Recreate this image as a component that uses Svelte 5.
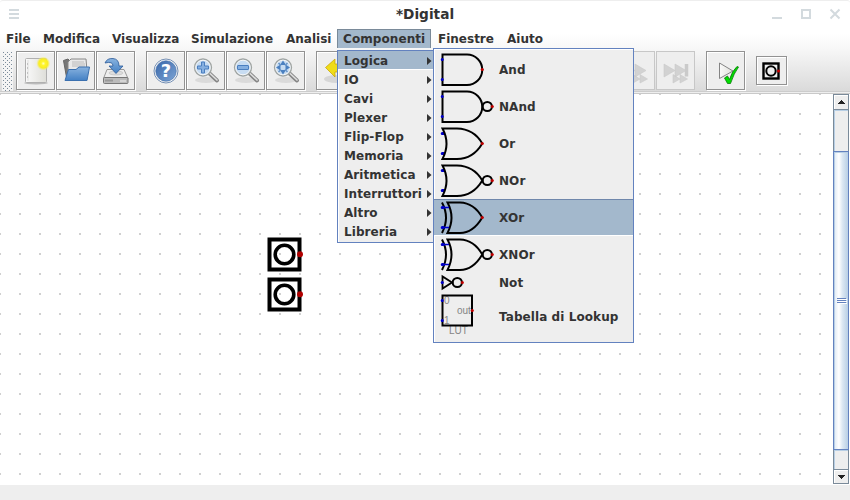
<script>
  const menus = [
    { t: 'File', x: 6 }, { t: 'Modifica', x: 43 }, { t: 'Visualizza', x: 112 }, { t: 'Simulazione', x: 191 },
    { t: 'Analisi', x: 286 }, { t: 'Componenti', x: 343 }, { t: 'Finestre', x: 438 }, { t: 'Aiuto', x: 507 }
  ];
  const widths = menus.map((m, i) => (i < 7 ? menus[i + 1].x - m.x : 60));
  const groups = ['Logica', 'IO', 'Cavi', 'Plexer', 'Flip-Flop', 'Memoria', 'Aritmetica', 'Interruttori', 'Altro', 'Libreria'];
  const parts = [
    { t: 'And', k: 'and' }, { t: 'NAnd', k: 'and', inv: true }, { t: 'Or', k: 'or' }, { t: 'NOr', k: 'or', inv: true },
    { t: 'XOr', k: 'xor' }, { t: 'XNOr', k: 'xor', inv: true }, { t: 'Not', k: 'not', h: 19 }, { t: 'Tabella di Lookup', k: 'lut', h: 49 }
  ];
  const tools = ['new', 'open', 'save', '', 'help', 'in', 'out', 'fit', '', 'back'];
</script>

{#snippet tool(k)}
  <svg width="39" height="39" viewBox="0 0 39 39">
    {#if k === 'new'}
      <ellipse cx="20" cy="32" rx="12" ry="1.5" fill="#999" opacity=".6" />
      <rect x="9.5" y="7.5" width="21" height="24" rx="1" fill="url(#paper)" stroke="#b0b0b0" />
      <path d="M12 9V30" stroke="#ddd" /><path d="M11 13h1M11 17h1M11 22h1M11 26h1" stroke="#999" />
      <circle cx="27.3" cy="12.5" r="7" fill="url(#glow)" />
    {:else if k === 'open'}
      <path d="M7.5 9.5L12 8l2 2v18l-3 1z" fill="#777" stroke="#666" />
      <path d="M12 11l3-3h15l1 12H12z" fill="#e9e9e9" stroke="#888" /><path d="M16 11h12M16 13h13M16 15h13" stroke="#bbb" />
      <path d="M9 29.5L12.5 18.5H20l3-2.5h10.5L31 29.5z" fill="url(#blue)" stroke="#3b70af" />
    {:else if k === 'save'}
      <path d="M11 18.5h17l4 9H7.5z" fill="#eee" stroke="#999" />
      <rect x="7.5" y="26.5" width="24.5" height="6" rx="1" fill="#bbb" stroke="#777" />
      <path d="M10 28.5v2M12 28.5v2M14 28.5v2M16 28.5v2" stroke="#777" /><path d="M24 30h6" stroke="#eee" />
      <ellipse cx="20" cy="22" rx="7" ry="2" fill="#ddd" stroke="#bbb" stroke-width=".6" />
      <path d="M9 12Q11 7 17 7.5Q23 8 23 15h4l-7 7.500-7-7.500h4q0-5-8-3z" fill="url(#blue)" stroke="#2c5b99" stroke-width=".8" />
    {:else if k === 'help'}
      <circle cx="20" cy="20" r="12" fill="#f4f4f4" stroke="#7590b5" /><circle cx="20" cy="20" r="10.3" fill="url(#helpblue)" stroke="#3465a4" stroke-width=".5" />
      <text x="20" y="26" text-anchor="middle" class="qmark">?</text>
    {:else if k === 'in' || k === 'out' || k === 'fit'}
      <ellipse cx="20" cy="29" rx="11" ry="3" fill="#aaa" opacity=".28" />
      <path d="M22.5 21.5L31 29.5" stroke="#858585" stroke-width="4" stroke-linecap="round" /><path d="M23 21.5L31 29" stroke="#ddd" stroke-width="1.7" stroke-linecap="round" />
      <circle cx="17" cy="16.5" r="8.4" fill="#c7dcf2" stroke="#a0a5a3" stroke-width="1.5" /><circle cx="17" cy="16.5" r="7.3" fill="none" stroke="#f7f7f7" />
      {#if k === 'in'}<path d="M15.5 11h3v4H22.500v3h-4v4h-3V18h-4v-3h4z" fill="#85afe0" stroke="#4b7fc0" />
      {:else if k === 'out'}<rect x="11.5" y="14.5" width="11" height="4" rx=".5" fill="#85afe0" stroke="#4b7fc0" />
      {:else}<path d="M17 9.500l3 4.500h-6zM17 23.500l3-4.500h-6zM10 16.500L14.500 13.500v6zM24 16.500L19.500 13.500v6z" fill="#4b80c0" /><path d="M12.500 12l2.500 2.500M21.500 12l-2.500 2.500M12.500 21l2.500-2.500M21.500 21l-2.500-2.500" stroke="#6795ca" stroke-width="1.5" />{/if}
    {:else if k === 'back'}
      <ellipse cx="21" cy="28" rx="13" ry="4" fill="#aaa" opacity=".35" />
      <path d="M9.5 16.5L19 8v5h11v8H19v5z" fill="#f0dc18" stroke="#c4a000" stroke-width=".7" />
    {:else if k === 'fast' || k === 'end'}
      <path d="M8 13v13l11-6.500zM19 13v13l11-6.500zM17 23.500v8.500l7-4zM24 23.500v8.500l7.500-4z" fill="#d2d2d2" stroke="#cacaca" stroke-width=".6" />
      {#if k === 'end'}<path d="M30.5 13v12.5" stroke="#cacaca" stroke-width="3.5" />{/if}
    {:else if k === 'check'}
      <path d="M13.5 12v15.5L27 20z" fill="url(#paper)" stroke="#777" stroke-width=".9" />
      <path d="M18.5 27l3-2 2 3.500Q26 20 31 15.500l1.500.5Q28 22 24.500 32.500h-3z" fill="#0d0" stroke="#087808" stroke-width=".8" />
    {/if}
  </svg>
{/snippet}

{#snippet gate(p)}
  <svg class="gate" width="56" height={p.h ?? 37} fill="none" stroke="#000" stroke-width="2">
    {#if p.k === 'and'}
      <path d="M2.5 3.5H27A15.2 15.2 0 0 1 27 34H2.5z" />
      <path class="pin" d="M2.2 8.500h.1M2.200 28.500h.1" />
    {:else if p.k === 'or'}
      <path class="pin" d="M2.2 8.500h1.500M2.200 28.500h1.500" />
      <path d="M2.5 3.5H17Q34 4 42.300 18.500Q33 34 17 34H2.500Q10.500 18.500 2.500 3.500z" />
    {:else if p.k === 'xor'}
      <path d="M2 3.5Q10 18.500 2 34M7.500 3.500H20Q34 4 42.300 18.500Q33 34 20 34H7.500Q15.500 18.500 7.500 3.500z" />
      <path class="line" d="M2 8.500h7M2 28.500h7" />
      <path class="pin" d="M2.2 8.500h1M2.200 28.500h1" />
    {:else if p.k === 'not'}
      <path d="M2.5 3.5V15.5L12 9.5z" stroke-width="1.8" /><circle cx="17.3" cy="9.5" r="4.6" />
      <path class="pin" d="M2.2 9.500h.1" /><path class="red" d="M22.300 9.500h.1" />
    {:else}
      <g class="small"><text x="4" y="11.8">0</text><text x="4" y="31.7">1</text><text x="17" y="21.7">out</text><text x="9" y="42">LUT</text></g>
      <rect x="2.5" y="3.5" width="29.5" height="30" />
      <path class="pin" d="M2.2 8.500h.1M2.200 28.500h.1" />
      <path class="red" d="M32.2 18.500h.1" />
    {/if}
    {#if p.h == null}
      {#if p.inv}<circle cx="47.3" cy="18.5" r="4.6" />{/if}
      <path class="red" d={p.inv ? 'M52.2 18.5h.1' : 'M42.2 18.5h.1'} />
    {/if}
  </svg>
{/snippet}

<div class="window">
  <svg class="defs" width="0" height="0">
    <defs>
      <linearGradient id="paper"><stop stop-color="#fafafa" /><stop offset="1" stop-color="#deded9" /></linearGradient>
      <radialGradient id="glow"><stop stop-color="#ffffc0" /><stop offset=".3" stop-color="#fff52a" /><stop offset=".65" stop-color="#f8ec25" /><stop offset="1" stop-color="#f8f060" stop-opacity="0" /></radialGradient>
      <linearGradient id="blue" x2="0" y2="1"><stop stop-color="#89b3df" /><stop offset="1" stop-color="#4380c4" /></linearGradient>
      <linearGradient id="helpblue" x2="1" y2="1"><stop stop-color="#3967a9" /><stop offset="1" stop-color="#7ca4d5" /></linearGradient>
    </defs>
  </svg>
  <header class="title">
    <svg width="20" height="28" class="burger"><path d="M0 10h10M0 14h10M0 18h10" stroke="#d3dade" stroke-width="2" /></svg>
    <span>*Digital</span>
    <svg width="80" height="28" class="controls" fill="none" stroke="#d3dade" stroke-width="2"><path d="M2 18h10M60.5 9.5l9 9M69.500 9.500l-9 9" /><path d="M32 10h8v8h-8z" /></svg>
  </header>
  <div class="bars">
    <nav>
      {#each menus as m, i}
        <div class="menu" style:width="{widths[i]}px"><span class:open={i === 5}>{m.t}</span></div>
      {/each}
    </nav>
    <div class="toolbar">
      <div class="handle"></div>
      {#each tools as k}
        {#if k}<div class="btn">{@render tool(k)}</div>{:else}<i></i>{/if}
      {/each}
      <div class="right">
        <div class="btn off">{@render tool('fast')}</div>
        <div class="btn off">{@render tool('end')}</div>
        <i></i>
        <div class="btn">{@render tool('check')}</div>
        <i></i>
        <div class="btn little"><svg width="31" height="29"><rect x="7.5" y="7.5" width="15" height="15" fill="none" stroke="#000" stroke-width="2.4" /><circle cx="15" cy="15" r="4.7" fill="none" stroke="#000" stroke-width="2" /><circle cx="22.5" cy="15" r="1.5" fill="#c00" /></svg></div>
      </div>
    </div>
  </div>
  <main>
    <div class="canvas">
      {#each [254, 294] as y}
        <svg class="input" style:top="{y - 111}px" width="40" height="36"><rect x="4.5" y="2.5" width="30" height="30" fill="none" stroke="#000" stroke-width="4" /><circle cx="19.5" cy="17.5" r="9.3" fill="none" stroke="#000" stroke-width="3.6" /><circle cx="35" cy="17.2" r="3" fill="#b00000" /></svg>
      {/each}
    </div>
    <div class="scroll">
      <div class="arrow"><svg width="8" height="4" shape-rendering="crispEdges"><path d="M4 0L8 4H0z" /></svg></div>
      <div class="track upper"></div>
      <div class="thumb"><svg width="10" height="7" shape-rendering="crispEdges"><path d="M0 .5h9M0 2.500h9M0 4.500h9" stroke="#6382bf" /><path d="M1 1.500h9M1 3.500h9M1 5.500h9" stroke="#fff" /></svg></div>
      <div class="track"></div>
      <div class="arrow down"><svg width="9" height="4" shape-rendering="crispEdges"><path d="M0 0h9L4.500 4z" /></svg></div>
    </div>
  </main>
  <footer></footer>

  <div class="popup groups">
    {#each groups as g, i}
      <div class="row" class:active={i === 0}><span>{g}</span><svg width="5" height="8"><path d="M0 0L4.500 4L0 8z" fill="#333" /></svg></div>
    {/each}
  </div>
  <div class="popup parts">
    {#each parts as p}
      <div class="part" class:active={p.t === 'XOr'} style:height="{p.h ?? 37}px">{@render gate(p)}<span>{p.t}</span></div>
    {/each}
  </div>
</div>

<style>
  :global(body) { margin: 0; overflow: hidden; }
  .window { position: relative; width: 850px; height: 500px; display: flex; flex-direction: column; font: bold 12px/14px "DejaVu Sans", sans-serif; color: #333; background: #fff; box-sizing: border-box; overflow: hidden; }
  .window :global(*) { box-sizing: border-box; }
  svg { display: block; flex: none; }
  .defs { position: absolute; }
  .title { height: 29px; flex: none; display: flex; justify-content: space-between; border-top: 1px solid #eee; border-radius: 3px 3px 0 0; font-size: 13.7px; line-height: 27px; padding: 0 0 0 9px; }
  .burger { width: 70px; margin-top: -1px; }
  .title > span { margin-left: 1px; }
  .controls { margin-top: -1px; }
  .bars { height: 65px; flex: none; background: linear-gradient(#fff, #fff 5px, #f7f7f7 20px, #dadada 62px); border-bottom: 1px solid #c9c9c9; box-shadow: inset 0 -1px #eee, inset 0 -2px #ccc; }
  nav { display: flex; height: 19px; }
  .menu { display: flex; flex: none; white-space: nowrap; }
  .menu span { padding: 3px 0 0 6px; }
  .menu .open { width: 94px; padding: 2px 0 0 5px; background: #a3b8cc; border: 1px solid #7a8a99; border-bottom: 0; letter-spacing: .08px; }
  .toolbar { display: flex; align-items: flex-start; padding: 3px 0 0 2px; }
  .handle { width: 11px; height: 40px; margin-right: 3px; background-color: #f4f4f4; background-image: conic-gradient(at 1px 1px, transparent 0 270deg, #7a8a99 0), conic-gradient(at 1px 1px, transparent 0 270deg, #7a8a99 0); background-size: 4px 4px; background-position: 1px 1px, 3px 3px; }
  .btn { width: 39px; height: 39px; margin-right: 1px; flex: none; background: #eee; border: 1px solid #929292; box-shadow: inset 1px 1px #fff, 1px 1px #fff; }
  .btn > svg { margin: -1px; }
  .btn.off { border-color: #c7c7c7; box-shadow: none; }
  .btn.little { width: 31px; height: 29px; margin-top: 5px; }
  .toolbar i { width: 10px; flex: none; }
  .right { display: flex; margin-left: 260px; flex: none; }
  main { height: 391px; display: flex; flex: none; }
  .canvas { position: relative; width: 833px; background: conic-gradient(from 0deg at 2px 2px, transparent 0 270deg, #d0d0d0 0) -1px -1px / 20px 20px; }
  .input { position: absolute; left: 265px; }
  .scroll { width: 16px; display: flex; flex-direction: column; }
  .arrow { height: 16px; border: 1px solid #7a8a99; background: #eee; box-shadow: inset 1px 1px #fff; display: flex; justify-content: center; align-items: center; fill: #222; }
  .arrow.down { height: 15px; }
  .track { height: 19px; border: solid #7a8a99; border-width: 0 1px; background: #eee; box-shadow: inset 1px 1px #b8cfe5; }
  .track.upper { height: 41px; }
  .thumb { height: 299px; border: 1px solid #6382bf; background: linear-gradient(90deg, #dce8f4, #fff 35%, #dce8f3 60%, #b8cfe5); box-shadow: inset 1px 1px #b8cfe5; display: flex; justify-content: center; align-items: center; padding: 2px 0 0 1px; }
  footer { height: 15px; background: #eee; }
  .popup { position: absolute; background: #eee; border: 1px solid #6382bf; box-shadow: inset 1px 1px #fff; letter-spacing: .08px; }
  .groups { left: 337px; top: 50px; width: 98px; height: 193px; }
  .groups .row { height: 19px; display: flex; justify-content: space-between; align-items: center; padding: 0 2px 0 6px; }
  .active { background: #a3b8cc; }
  .groups .active { box-shadow: inset 0 -1px #fff; }
  .parts { left: 433px; top: 48px; width: 201px; height: 295px; padding: 2px 0 0; }
  .part { display: flex; align-items: center; padding-left: 6px; }
  .part.active { box-shadow: inset 0 1px #6f87ab, inset 0 -1px #fff; }
  .part > span { margin-left: 3px; }
  .gate .pin { stroke: #0000c8; stroke-width: 3; stroke-linecap: round; }
  .gate .line { stroke: #0000c8; stroke-width: 1.7; }
  .gate .red { stroke: #c00000; stroke-width: 3; stroke-linecap: round; }
  .small { font: 10px "Liberation Sans", sans-serif; fill: #858585; stroke: none; letter-spacing: 0; }
  .qmark { font: bold 18px "DejaVu Sans", sans-serif; fill: #fff; }
</style>
